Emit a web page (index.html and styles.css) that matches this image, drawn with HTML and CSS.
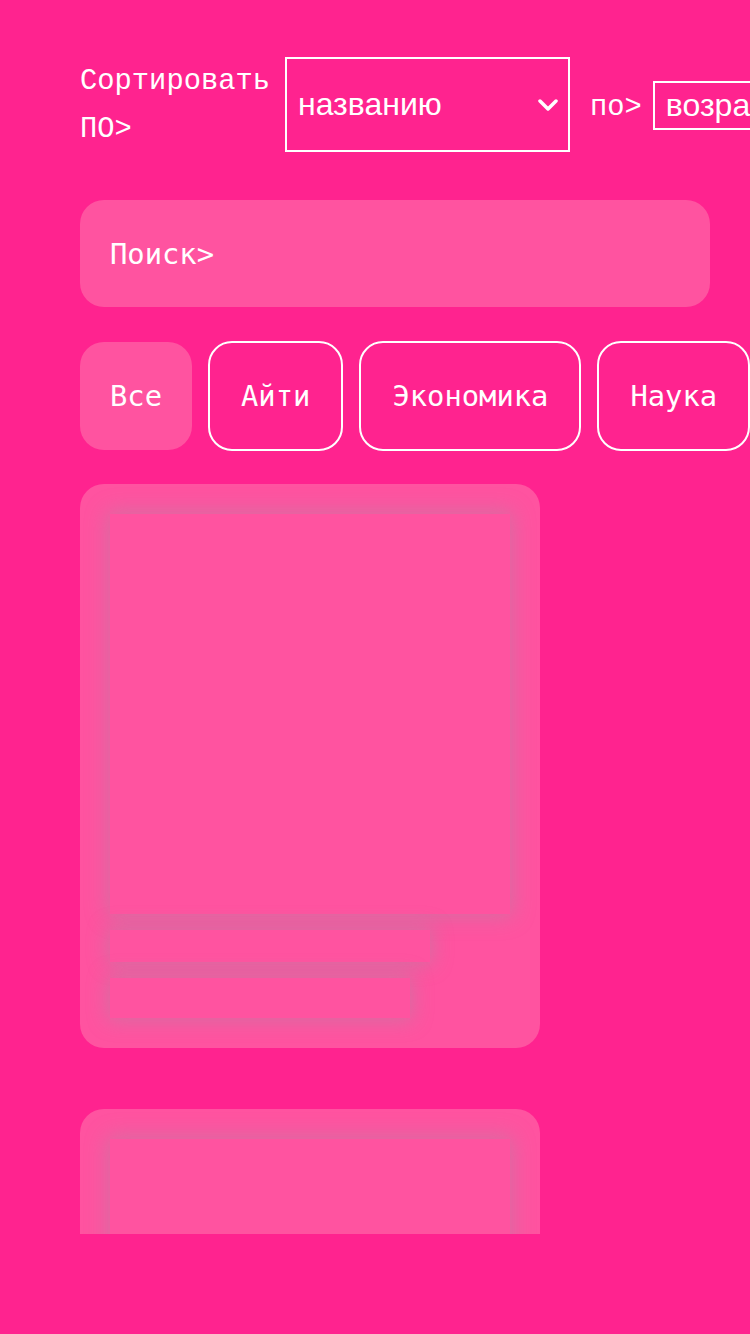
FILE: index.html
```html
<!DOCTYPE html>
<html lang="ru">
<head>
<meta charset="utf-8">
<title>Каталог</title>
<link rel="stylesheet" href="styles.css">
</head>
<body>
<div class="page">
  <div class="sort-row">
    <span class="sort-label">Сортировать ПО&gt;</span>
    <div class="select select-big">
      <span class="select-text">названию</span>
      <svg class="chev" width="20" height="12" viewBox="0 0 20 12"><polyline points="2,2 10,10 18,2" fill="none" stroke="#fff" stroke-width="3.5" stroke-linecap="round" stroke-linejoin="round"/></svg>
    </div>
    <span class="sort-by">по&gt;</span>
    <div class="select select-small">
      <span class="select-text">возрастанию</span>
    </div>
  </div>

  <div class="search">Поиск&gt;</div>

  <div class="chips">
    <div class="chip chip-active">Все</div>
    <div class="chip">Айти</div>
    <div class="chip">Экономика</div>
    <div class="chip">Наука</div>
  </div>

  <div class="list">
    <div class="card">
      <div class="sk sk-img"></div>
      <div class="sk sk-line1"></div>
      <div class="sk sk-line2"></div>
    </div>
    <div class="card">
      <div class="sk sk-img"></div>
      <div class="sk sk-line1"></div>
      <div class="sk sk-line2"></div>
    </div>
  </div>
</div>
</body>
</html>
```

FILE: styles.css
```css
html, body {
  margin: 0;
  padding: 0;
  background: #ff238f;
  overflow: hidden;
}

.page {
  box-sizing: border-box;
  height: 1334px;
  padding: 57px 0 0 80px;
  color: #fff;
}

.sort-row {
  display: flex;
  align-items: center;
  height: 95px;
  white-space: nowrap;
}

.sort-label {
  flex: 0 0 193px;
  white-space: normal;
  font-family: "Liberation Mono", monospace;
  font-size: 28.8px;
  line-height: 48px;
  margin-right: 12px;
  margin-top: 2px;
}

.select {
  flex-shrink: 0;
  box-sizing: border-box;
  border: 2px solid #fff;
  display: flex;
  align-items: center;
  font-family: "Liberation Sans", Arial, sans-serif;
  font-size: 32px;
  padding-left: 11px;
}

.select-big {
  width: 285px;
  height: 95px;
  justify-content: space-between;
  padding-right: 10px;
}

.select-small {
  width: 240px;
  height: 49px;
  margin-top: 2px;
}

.chev {
  display: block;
  margin-top: 1px;
}

.sort-by {
  font-family: "Liberation Mono", monospace;
  font-size: 28.8px;
  margin-left: 20px;
  margin-right: 11px;
  margin-top: 5px;
}

.search {
  box-sizing: border-box;
  width: 630px;
  height: 107px;
  margin-top: 48px;
  border-radius: 24px;
  background: #ff53a0;
  display: flex;
  align-items: center;
  padding-left: 30px;
  font-family: "DejaVu Sans Mono", monospace;
  font-size: 28.8px;
}

.chips {
  display: flex;
  align-items: center;
  gap: 16px;
  margin-top: 34px;
  height: 110px;
  white-space: nowrap;
}

.chip {
  flex-shrink: 0;
  box-sizing: border-box;
  height: 110px;
  padding: 0 31px;
  border: 2px solid #fff;
  border-radius: 24px;
  display: flex;
  align-items: center;
  font-family: "DejaVu Sans Mono", monospace;
  font-size: 28.8px;
}

.chip-active {
  border: none;
  height: 108px;
  padding: 0 30px;
  background: #ff53a0;
}

.list {
  margin-top: 33px;
  height: 750px;
  overflow: hidden;
  display: flex;
  flex-direction: column;
  gap: 61px;
}

.card {
  flex-shrink: 0;
  box-sizing: border-box;
  width: 460px;
  padding: 30px;
  border-radius: 24px;
  background: #ff53a0;
  display: flex;
  flex-direction: column;
  gap: 16px;
}

.sk {
  background: #ff53a0;
  box-shadow: 0 0 20px 3px rgba(160, 145, 165, 0.42);
}

.sk-img {
  width: 400px;
  height: 400px;
}

.sk-line1 {
  width: 320px;
  height: 32px;
}

.sk-line2 {
  width: 300px;
  height: 40px;
}
```
